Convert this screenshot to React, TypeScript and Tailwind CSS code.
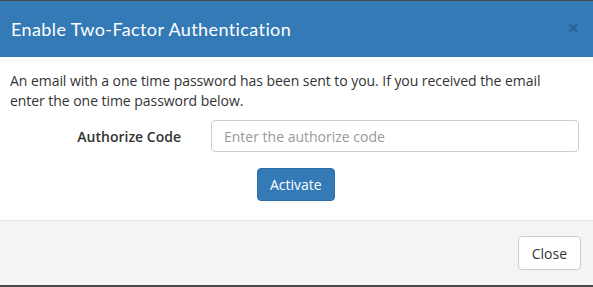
export default function App() {
  return (
    <div className="w-[593px] h-[287px] flex flex-col bg-white font-['Open_Sans',sans-serif] text-[#333] border-t-[1px] border-b-[2px] border-[#4a4a4a] overflow-hidden">
      <div className="h-[56px] bg-[#337ab7] flex items-center justify-between pl-[11px] pr-[14px]">
        <h4 className="text-white text-[18px] font-['Lato',sans-serif] tracking-[0.4px]">
          Enable Two-Factor Authentication
        </h4>
        <button className="text-[#1d4f7a] opacity-50 text-[20px] leading-none font-bold mt-[-3px]">×</button>
      </div>

      <div className="flex-1 px-[10px] pt-[14px]">
        <p className="text-[14px] leading-[20px] text-[#333] tracking-[-0.05px]">
          An email with a one time password has been sent to you. If you received the email
          <br />
          enter the one time password below.
        </p>
        <div className="flex items-center mt-[9px]">
          <label className="w-[171px] text-right text-[14px] font-semibold">Authorize Code</label>
          <input
            className="ml-[30px] w-[368px] h-[32px] border border-[#ccc] rounded-[4px] px-[12px] text-[14px] placeholder-[#999] outline-none"
            placeholder="Enter the authorize code"
          />
        </div>
        <div className="flex mt-[16px] pl-[247px]">
          <button className="h-[33px] px-[12px] bg-[#337ab7] border border-[#2e6da4] rounded-[4px] text-white text-[14px]">
            Activate
          </button>
        </div>
      </div>

      <div className="h-[65px] bg-[#f4f4f4] border-t border-[#e5e5e5] flex items-center justify-end pr-[12px]">
        <button className="h-[34px] px-[13px] bg-white border border-[#ccc] rounded-[4px] text-[14px] text-[#333]">
          Close
        </button>
      </div>
    </div>
  );
}
